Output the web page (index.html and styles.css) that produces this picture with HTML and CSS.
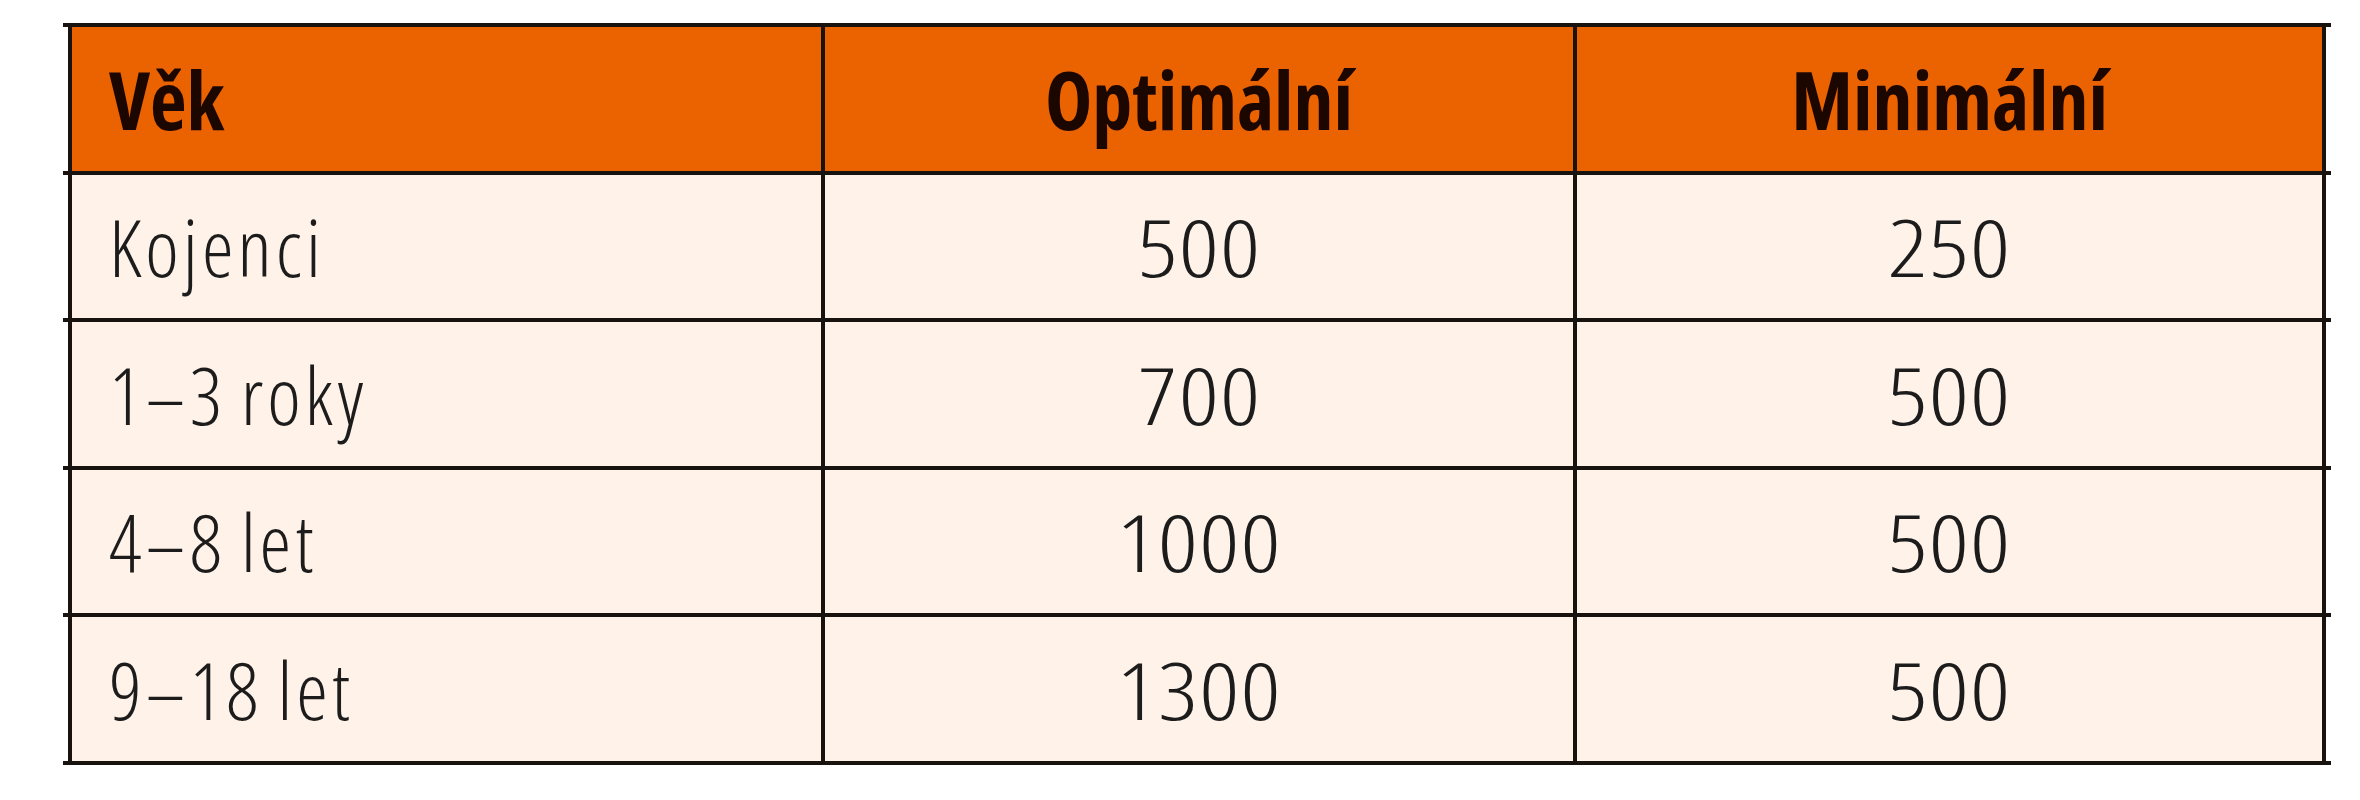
FILE: index.html
```html
<!DOCTYPE html>
<html lang="cs">
<head>
<meta charset="utf-8">
<title>Tabulka</title>
<link rel="stylesheet" href="styles.css">
</head>
<body>
<div class="table">
  <div class="row head">
    <div class="cell">Věk</div>
    <div class="cell c">Optimální</div>
    <div class="cell c">Minimální</div>
  </div>
  <div class="row">
    <div class="cell">Kojenci</div>
    <div class="cell c"><span class="num">500</span></div>
    <div class="cell c"><span class="num">250</span></div>
  </div>
  <div class="row">
    <div class="cell">1–3 roky</div>
    <div class="cell c"><span class="num">700</span></div>
    <div class="cell c"><span class="num">500</span></div>
  </div>
  <div class="row">
    <div class="cell">4–8 let</div>
    <div class="cell c"><span class="num">1000</span></div>
    <div class="cell c"><span class="num">500</span></div>
  </div>
  <div class="row">
    <div class="cell">9–18 let</div>
    <div class="cell c"><span class="num">1300</span></div>
    <div class="cell c"><span class="num">500</span></div>
  </div>
</div>
</body>
</html>
```
FILE: styles.css
```css
body {
  margin: 0;
  background: #ffffff;
}
.table {
  margin: 23px 0 0 63px;
  width: 2268px;
  border-bottom: 4px solid #18130f;
  font-family: "Open Sans", "DejaVu Sans", sans-serif;
  font-stretch: 75%;
  font-weight: 300;
  font-size: 80px;
  line-height: 1;
  color: #1c1c1c;
}
.row {
  display: grid;
  grid-template-columns: repeat(3, 1fr);
  padding: 0 5px;
  border-top: 4px solid #18130f;
}
.cell {
  height: 143.5px;
  display: flex;
  align-items: center;
  padding-left: 37px;
  background: #fef2e9;
  border-left: 4px solid #18130f;
  letter-spacing: 4px;
  word-spacing: -4px;
}
.cell:last-child {
  border-right: 4px solid #18130f;
}
.cell.c {
  justify-content: center;
  padding-left: 0;
  letter-spacing: 0;
  word-spacing: 0;
}
.num {
  display: inline-block;
  transform: scaleX(1.23);
  letter-spacing: 1px;
}
.head .cell {
  background: #eb6200;
  font-weight: 700;
  color: #1c0700;
  letter-spacing: 0;
  word-spacing: 0;
}
```
